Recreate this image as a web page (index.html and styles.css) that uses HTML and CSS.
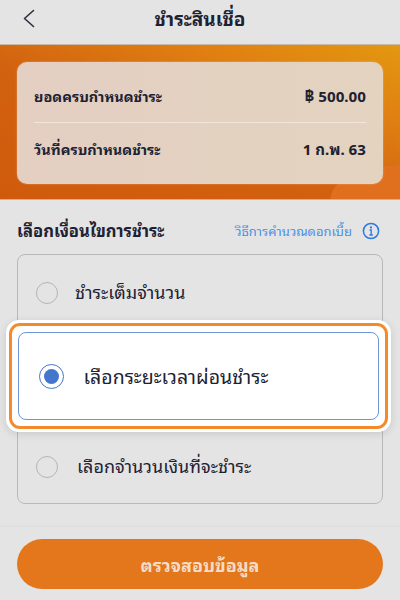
FILE: index.html
```html
<!DOCTYPE html>
<html lang="th">
<head>
<meta charset="utf-8">
<title>ชำระสินเชื่อ</title>
<link rel="stylesheet" href="styles.css">
</head>
<body>
<div class="screen">
  <header class="topbar">
    <svg class="back" width="12" height="20" viewBox="0 0 12 20"><path d="M10.5 1.5 L1.5 9.5 L10.5 17.5" fill="none" stroke="#2b3040" stroke-width="1.6" stroke-linecap="round" stroke-linejoin="round"/></svg>
    <h1 class="title">ชำระสินเชื่อ</h1>
  </header>
  <section class="hero">
    <div class="summary">
      <div class="line first"><span>ยอดครบกำหนดชำระ</span><span class="val"><span class="baht">฿</span> 500.00</span></div>
      <div class="rule"></div>
      <div class="line second"><span>วันที่ครบกำหนดชำระ</span><span class="val">1 ก.พ. 63</span></div>
    </div>
  </section>
  <main class="body">
    <div class="headrow">
      <h2 class="heading">เลือกเงื่อนไขการชำระ</h2>
      <span class="link">วิธีการคำนวณดอกเบี้ย</span>
      <svg class="info" width="18" height="18" viewBox="0 0 18 18"><circle cx="9" cy="9" r="7.6" fill="none" stroke="#2a7ae2" stroke-width="1.5"/><circle cx="9" cy="5.4" r="1.1" fill="#2a7ae2"/><path d="M7.6 8h1.6v5M7.4 13h3.4" fill="none" stroke="#2a7ae2" stroke-width="1.3"/></svg>
    </div>
    <div class="options">
      <div class="opt"><span class="radio"></span><span class="label one">ชำระเต็มจำนวน</span></div>
      <div class="picked">
        <div class="ring">
          <div class="inner"><span class="radio on"><span class="dot"></span></span><span class="label big">เลือกระยะเวลาผ่อนชำระ</span></div>
        </div>
      </div>
      <div class="opt"><span class="radio"></span><span class="label three">เลือกจำนวนเงินที่จะชำระ</span></div>
    </div>
  </main>
  <footer class="foot">
    <div class="cta">ตรวจสอบข้อมูล</div>
  </footer>
</div>
</body>
</html>
```
FILE: styles.css
```css
* { box-sizing: border-box; }
html, body { margin: 0; padding: 0; }
body { font-family: "Noto Sans Thai Looped", "Thonburi", "Loma", "Waree", "Garuda", "Tlwg Typo", "Noto Sans", "Liberation Sans", sans-serif; color: #1d2233; background: #e4e4e4; }
.screen { width: 400px; height: 600px; overflow: hidden; display: flex; flex-direction: column; }
.topbar { height: 45px; flex: none; display: flex; align-items: center; justify-content: center; position: relative; background: #e4e4e4; border-bottom: 1px solid #c9b9a8; }
.back { position: absolute; left: 23px; top: 9px; }
.title { margin: 0 0 8px; font-size: 19px; font-weight: 700; line-height: 36px; }
.hero { height: 155px; flex: none; padding: 17px 17px 0; background: radial-gradient(ellipse 70px 34px at 100% 100%, #e0701e 98%, transparent 100%), linear-gradient(20deg, #cf5a0c 0%, #d2620f 45%, #e08012 75%, #e39810 100%); border-bottom: 1px solid #e9a87c; }
.summary { height: 122px; border-radius: 10px; background: linear-gradient(90deg, #e4cfc3, #e3d3bf); padding: 0 17px; display: flex; flex-direction: column; box-shadow: 0 0 2px rgba(255,255,255,.4); }
.line { display: flex; align-items: center; justify-content: space-between; font-size: 14.5px; font-weight: 700; }
.first { height: 60px; padding-top: 6px; }
.second { height: 61px; padding-bottom: 11px; }
.val { font-size: 15px; }
.baht { font-size: 17px; line-height: 1; }
.rule { height: 1px; flex: none; background: #f0e6dc; }
.body { flex: 1; padding: 0 17px; background: #e4e4e4; }
.headrow { height: 54px; display: flex; align-items: center; padding-top: 7px; }
.heading { margin: 0 0 3px; font-size: 16.6px; font-weight: 700; flex: 1; }
.link { font-size: 13px; color: #4a8fe8; }
.info { margin-left: 10px; margin-right: 3px; }
.options { height: 250px; border: 1px solid #b9b9b9; border-radius: 8px; display: flex; flex-direction: column; }
.opt { height: 76px; flex: none; display: flex; align-items: center; padding-left: 18px; }
.picked { margin: -11px -9px -3px -12px; height: 112px; flex: none; background: #fff; border-radius: 13px; padding: 3px; position: relative; box-shadow: 0 2px 8px rgba(0,0,0,.12); }
.ring { height: 106px; border: 3.5px solid #f58a2a; border-radius: 11px; padding: 6px 6px 6px 5.5px; background: #fff; }
.inner { height: 100%; border: 1px solid #6f94d8; border-radius: 8px; display: flex; align-items: center; padding-left: 20px; }
.radio { width: 22px; height: 22px; flex: none; border-radius: 50%; border: 1px solid #b5b5b5; display: flex; align-items: center; justify-content: center; }
.radio.on { width: 25px; height: 25px; border: 1.5px solid #4477cc; }
.dot { width: 15px; height: 15px; border-radius: 50%; background: #4477cc; }
.label { margin-left: 18px; margin-bottom: 4px; font-size: 18px; }
.label.one { margin-left: 17px; }
.label.three { margin-left: 19px; }
.label.big { font-size: 19.5px; margin-left: 20px; margin-bottom: 2px; }
.foot { height: 73px; flex: none; padding: 12px 17px 0; background: #e4e4e4; box-shadow: 0 -1px 3px rgba(0,0,0,.04); }
.cta { height: 50px; border-radius: 25px; background: #e4761c; color: #f3dcc6; display: flex; align-items: center; justify-content: center; font-size: 18px; font-weight: 700; }
```
